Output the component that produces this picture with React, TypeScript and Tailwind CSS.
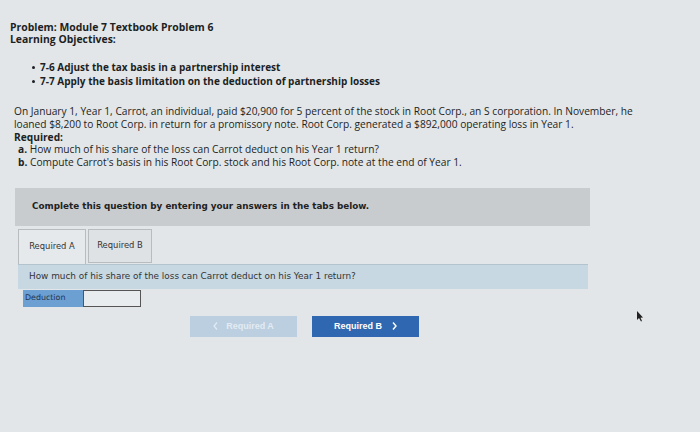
export default function App() {
  return (
    <div className="w-[700px] h-[432px] overflow-hidden bg-[#e3e6e8] text-[#1c1f24] relative" style={{ fontFamily: '"Open Sans", "Liberation Sans", sans-serif' }}>
      <div className="pt-[21px] pl-[10px]">
        <div className="text-[10.4px] leading-[12px] font-bold">Problem: Module 7 Textbook Problem 6</div>
        <div className="text-[10.4px] leading-[12px] font-bold">Learning Objectives:</div>
        <ul className="mt-[15px] ml-[22px] text-[10px] leading-[14px] font-bold">
          <li className="flex items-center gap-[5px]"><span className="w-[3px] h-[3px] rounded-full bg-[#1c1f24]" />7-6 Adjust the tax basis in a partnership interest</li>
          <li className="flex items-center gap-[5px]"><span className="w-[3px] h-[3px] rounded-full bg-[#1c1f24]" />7-7 Apply the basis limitation on the deduction of partnership losses</li>
        </ul>
      </div>
      <div className="mt-[17px] pl-[14px] pr-[50px] text-[10.2px] leading-[12.75px]">
        <p>On January 1, Year 1, Carrot, an individual, paid $20,900 for 5 percent of the stock in Root Corp., an S corporation. In November, he loaned $8,200 to Root Corp. in return for a promissory note. Root Corp. generated a $892,000 operating loss in Year 1.</p>
        <p className="font-bold">Required:</p>
        <p className="pl-[4px]"><span className="font-bold">a.</span> How much of his share of the loss can Carrot deduct on his Year 1 return?</p>
        <p className="pl-[4px]"><span className="font-bold">b.</span> Compute Carrot's basis in his Root Corp. stock and his Root Corp. note at the end of Year 1.</p>
      </div>
      <div className="ml-[15px] mt-[19px] w-[575px] h-[38px] bg-[#c9cccf] flex items-center pl-[17px]" style={{ fontFamily: '"DejaVu Sans", Verdana, sans-serif' }}>
        <span className="text-[8.8px] font-bold text-[#222]">Complete this question by entering your answers in the tabs below.</span>
      </div>
      <div className="ml-[18px] mt-[3px] flex gap-[2px] text-[8.4px] text-[#333]" style={{ fontFamily: '"DejaVu Sans", Verdana, sans-serif' }}>
        <div className="w-[68px] h-[35px] border border-[#b9bcbf] border-b-0 bg-[#e6e9eb] flex items-center justify-center">Required A</div>
        <div className="w-[64px] h-[34px] border border-[#b9bcbf] bg-[#dfe2e4] flex items-center justify-center">Required B</div>
      </div>
      <div className="ml-[18px] w-[570px] h-[25px] bg-[#c7d8e3] border-t border-[#b3c4cf] flex items-center pl-[11px] text-[8.9px] text-[#333]" style={{ fontFamily: '"DejaVu Sans", Verdana, sans-serif' }}>
        How much of his share of the loss can Carrot deduct on his Year 1 return?
      </div>
      <div className="ml-[23px] mt-[1px] flex h-[17px]" style={{ fontFamily: '"DejaVu Sans", Verdana, sans-serif' }}>
        <div className="w-[60px] bg-[#6c9fd2] text-[7.9px] text-[#1f3550] flex items-center pl-[2px]">Deduction</div>
        <div className="w-[58px] bg-[#e9ecee] border border-[#555]" />
      </div>
      <div className="mt-[9px] flex gap-[15px] pl-[190px] text-[9px] font-bold" style={{ fontFamily: '"Liberation Sans", Arial, sans-serif' }}>
        <div className="w-[107px] h-[21px] bg-[#bccfe0] text-[#e2ebf3] flex items-center justify-center gap-[8px]">
          <svg width="5" height="8" viewBox="0 0 5 8"><path d="M4 0.5 L1 4 L4 7.5" fill="none" stroke="#e2ebf3" strokeWidth="1.2" /></svg>
          Required A
        </div>
        <div className="w-[107px] h-[21px] bg-[#2f68b1] text-white flex items-center justify-center gap-[10px]">
          Required B
          <svg width="5" height="8" viewBox="0 0 5 8"><path d="M1 0.5 L4 4 L1 7.5" fill="none" stroke="#ffffff" strokeWidth="1.4" /></svg>
        </div>
      </div>
      <svg className="absolute left-[636px] top-[311px]" width="8" height="11" viewBox="0 0 8 11">
        <path d="M1 0 L1 9 L3 7 L5 10.5 L6 10 L4.5 6.8 L7 6.5 Z" fill="#222" />
      </svg>
    </div>
  );
}
